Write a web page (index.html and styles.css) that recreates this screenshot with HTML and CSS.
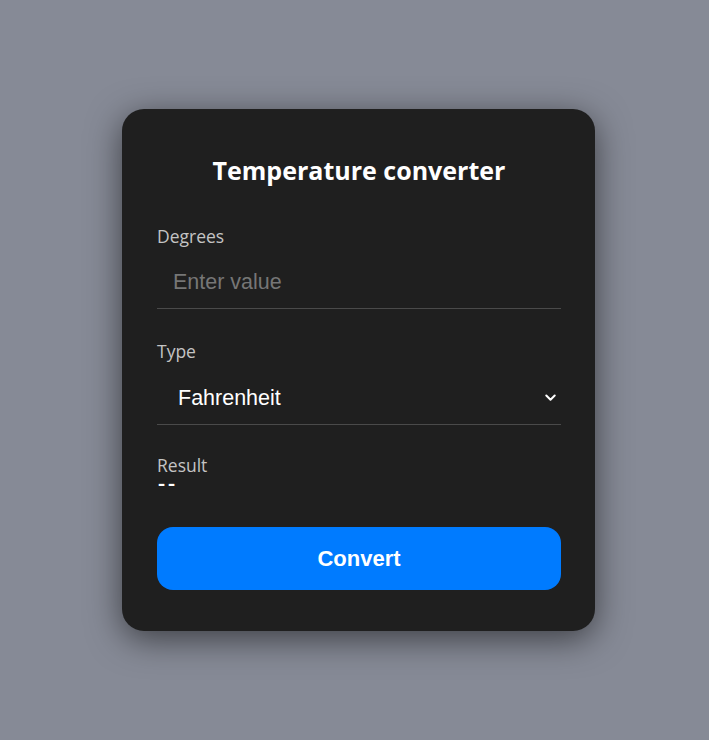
FILE: index.html
```html
<!DOCTYPE html>
<html>
<head>
<meta charset="utf-8">
<link rel="stylesheet" href="styles.css">
</head>
<body>
<div class="card">
  <h1 class="title">Temperature converter</h1>
  <label class="label label-degrees" for="deg">Degrees</label>
  <input id="deg" class="field" type="text" placeholder="Enter value">
  <label class="label label-type" for="type">Type</label>
  <div class="select-wrap">
    <select id="type" class="field select">
      <option>Fahrenheit</option>
      <option>Celsius</option>
    </select>
    <svg class="chevron" width="11" height="8" viewBox="0 0 11 8"><path d="M1.3 1.5 L5.5 5.7 L9.7 1.5" fill="none" stroke="#fff" stroke-width="2" stroke-linecap="round" stroke-linejoin="round"/></svg>
  </div>
  <div class="label label-result">Result</div>
  <div class="result">--</div>
  <button class="btn">Convert</button>
</div>
</body>
</html>
```
FILE: styles.css
```css
html, body {
  margin: 0;
  padding: 0;
}
body {
  background: #868a96;
  width: 709px;
  height: 740px;
  box-sizing: border-box;
  padding-left: 8px;
  display: flex;
  justify-content: center;
  align-items: flex-start;
}
.card {
  margin-top: 109px;
  width: 473px;
  box-sizing: border-box;
  background: #1f1f1f;
  border-radius: 22px;
  padding: 45px 34px 41px 35px;
  display: flex;
  flex-direction: column;
  box-shadow: 0 8px 34px rgba(0, 0, 0, 0.55);
}
.title {
  margin: 0;
  font-family: "Open Sans", "Noto Sans", sans-serif;
  font-weight: 700;
  font-size: 25px;
  line-height: 32px;
  color: #fff;
  text-align: center;
}
.label {
  font-family: "Open Sans", "Noto Sans", sans-serif;
  font-size: 17.5px;
  line-height: 22px;
  color: #c4c4c4;
}
.label-degrees { margin-top: 39px; }
.label-type { margin-top: 31px; }
.label-result { margin-top: 29px; }
.field {
  display: block;
  width: 100%;
  box-sizing: border-box;
  margin: 9px 0 0;
  background: transparent;
  border: none;
  border-bottom: 1px solid #4a4a4a;
  outline: none;
  padding: 14px 16px;
  font-family: "Liberation Sans", Arial, sans-serif;
  font-size: 21.5px;
  line-height: 24px;
  height: 53px;
  color: #fff;
}
.field::placeholder {
  color: #767676;
}
.select-wrap {
  position: relative;
  margin-top: 10px;
}
.select-wrap .field {
  margin-top: 0;
}
.select {
  -webkit-appearance: none;
  appearance: none;
  padding-left: 21px;
}
.select option {
  background: #1f1f1f;
}
.chevron {
  position: absolute;
  right: 5px;
  top: 22px;
  pointer-events: none;
}
.result {
  font-family: "Open Sans", "Noto Sans", sans-serif;
  font-weight: 600;
  font-size: 22px;
  line-height: 16px;
  letter-spacing: 3px;
  color: #fff;
  margin-top: -2px;
  padding-left: 1px;
}
.btn {
  margin-top: 37px;
  height: 63px;
  border: none;
  border-radius: 16px;
  background: #007bff;
  color: #fff;
  font-family: "Liberation Sans", Arial, sans-serif;
  font-weight: 700;
  font-size: 22px;
  cursor: pointer;
}
```
